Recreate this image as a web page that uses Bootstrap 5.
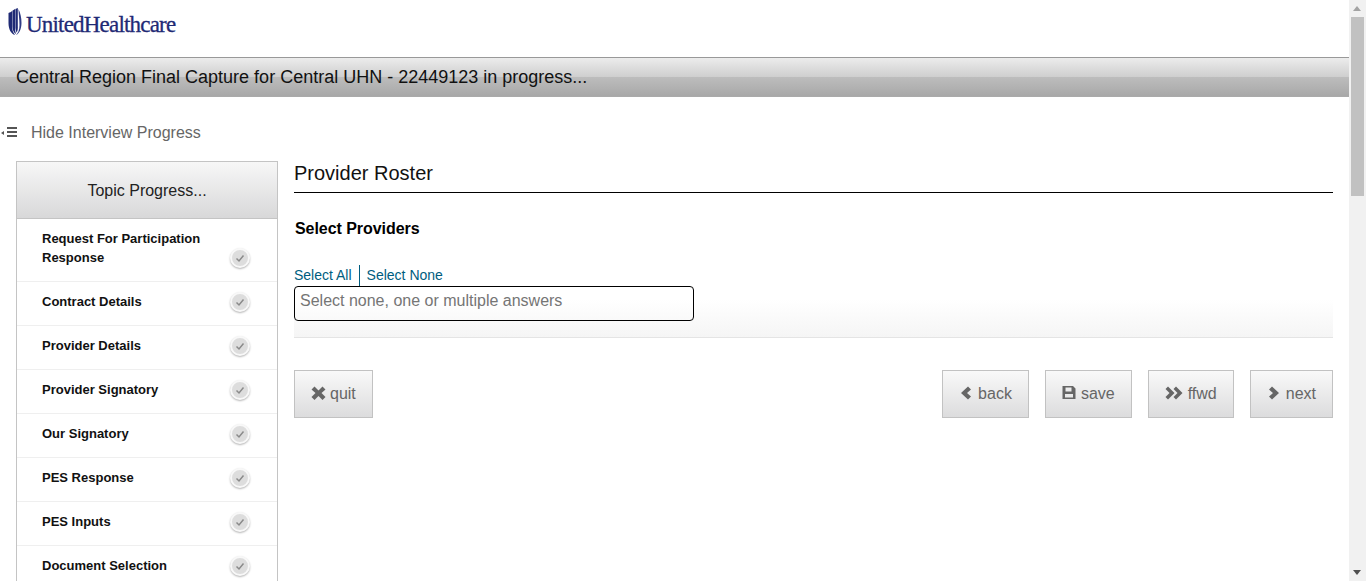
<!DOCTYPE html>
<html lang="en">
<head>
    <meta charset="UTF-8">
    <title>Provider Roster</title>
    <link href="https://cdn.jsdelivr.net/npm/bootstrap@5.3.0/dist/css/bootstrap.min.css" rel="stylesheet">
    <script src="https://cdn.jsdelivr.net/npm/bootstrap@5.3.0/dist/js/bootstrap.bundle.min.js"></script>
    <style>
        html, body {
            height: 581px;
            overflow: hidden;
        }
        body {
            font-family: "Liberation Sans", Arial, sans-serif;
            background-color: #fff;
            color: #000;
        }
        .page-wrap {
            width: 1349px;
            height: 581px;
            overflow: hidden;
        }
        .brand-row {
            height: 57px;
            padding: 8px 0 0 8px;
        }
        .brand-name {
            font-family: "Liberation Serif", serif;
            font-size: 23px;
            line-height: 34px;
            letter-spacing: -0.8px;
            color: #1f2a75;
            margin-left: 4px;
            -webkit-text-stroke: 0.3px #1f2a75;
        }
        .title-bar {
            height: 40px;
            border-top: 1px solid #999;
            border-bottom: 1px solid #aaa;
            background: linear-gradient(to bottom, #ececec 0%, #cfcfcf 49%, #bdbdbd 50%, #a8a8a8 100%);
            font-size: 18px;
            line-height: 38px;
            padding-left: 16px;
            color: #111;
        }
        .toggle-row {
            height: 64px;
            padding-top: 25px;
            font-size: 16px;
            line-height: 22px;
            color: #666;
        }
        .toggle-row svg {
            margin-right: 13px;
        }
        .main-row {
            padding: 0 16px;
            gap: 16px;
        }
        .topic-panel {
            width: 262px;
            flex: none;
            border: 1px solid #c4c4c4;
            height: 460px;
        }
        .topic-head {
            height: 57px;
            border-bottom: 1px solid #c4c4c4;
            background: linear-gradient(to bottom, #f7f7f7, #d8d8d9);
            font-size: 16px;
            line-height: 57px;
            text-align: center;
            color: #222;
        }
        .topic-item {
            padding: 10px 25px 14px 25px;
            border-bottom: 1px solid #efefef;
            font-size: 13px;
            font-weight: 700;
            line-height: 19px;
            color: #111;
            position: relative;
        }
        .topic-text {
            width: 175px;
        }
        .done-dot {
            position: absolute;
            right: 27px;
            bottom: 13px;
            width: 20px;
            height: 20px;
            border-radius: 50%;
            background: #ddd;
            box-shadow: 0 1px 2px 0 rgba(0, 0, 0, .3);
            border: 2px solid #f8f8f8;
        }
        .done-dot svg {
            display: block;
        }
        .roster-col {
            flex: 1;
        }
        .roster-title {
            height: 32px;
            border-bottom: 1px solid #000;
            font-size: 20px;
            line-height: 24px;
            font-weight: 400;
            margin: 0;
            color: #111;
        }
        .roster-sub {
            font-size: 16px;
            font-weight: 700;
            line-height: 20px;
            letter-spacing: -0.05px;
            margin: 26px 0 0 1px;
            color: #000;
        }
        .answer-box {
            height: 84px;
            margin-top: 15px;
            padding-top: 11px;
            border-bottom: 1px solid #e4e4e4;
            background: linear-gradient(to bottom, #fff 55%, #f5f5f5 100%);
        }
        .pick-links {
            font-size: 14px;
            line-height: 21px;
            height: 21px;
        }
        .pick-links a {
            color: #005d80;
            text-decoration: none;
        }
        .pick-links a + a {
            border-left: 1px solid #005d80;
            margin-left: 7px;
            padding-left: 7px;
            display: inline-block;
        }
        .answer-input {
            width: 400px;
            height: 35px;
            border: 1px solid #000;
            border-radius: 4px;
            padding: 4px 5px;
            font-size: 16px;
            line-height: 20px;
            color: #757575;
        }
        .btn-row {
            margin-top: 32px;
        }
        .step-btn {
            height: 48px;
            padding: 0 16px;
            border: 1px solid #c2c2c2;
            border-radius: 0;
            background: linear-gradient(to bottom, #f9f9f9, #dcdcdd);
            font-size: 16px;
            line-height: 46px;
            color: #666;
            display: inline-flex;
            align-items: center;
            gap: 5px;
        }
        .step-btn svg {
            margin-top: -3px;
        }
        .quit-btn {
            gap: 4px;
        }
        .step-group {
            gap: 16px;
        }
        .fake-scroll {
            position: fixed;
            top: 0;
            right: 0;
            width: 17px;
            height: 581px;
            background: #f1f1f1;
        }
        .fake-thumb {
            position: absolute;
            top: 17px;
            left: 2px;
            width: 13px;
            height: 179px;
            background: #c1c1c1;
        }
        .fake-arrow {
            position: absolute;
            left: 4px;
            width: 0;
            height: 0;
            border-left: 4px solid transparent;
            border-right: 4px solid transparent;
        }
        .arrow-up {
            top: 6px;
            border-bottom: 5px solid #a3a3a3;
        }
        .arrow-down {
            bottom: 6px;
            border-top: 5px solid #505050;
        }
    </style>
</head>
<body>
    <div class="page-wrap">
        <!-- Logo -->
        <div class="brand-row d-flex align-items-start">
            <svg width="14" height="29" viewBox="0 0 14 29">
                <path d="M0.5 5 C2 4.5 3 4 4 3 V19 C4 22 5.5 25 7 27 C3 26 0.5 21 0.5 15 Z" fill="#1f2a75"/>
                <path d="M4.4 2.7 C5.5 2 6.4 1.5 7 1 V20 C7 22 7.3 24 8 26 C6 25 4.4 22 4.4 19 Z" fill="#1f2a75"/>
                <path d="M7.4 1 L9.8 0 V20 C9.8 22 9.2 24 8.5 24.5 C8 23 7.4 21 7.4 19 Z" fill="#1f2a75"/>
                <path d="M10.5 1 C12.5 5 13.5 10 13.5 15 C13.5 21 11 26 8 27 C10 25 11.5 22 11.5 17 C11.5 11 10.5 6 10.5 1 Z" fill="#2f3b85"/>
            </svg>
            <span class="brand-name">UnitedHealthcare</span>
        </div>

        <div class="title-bar">Central Region Final Capture for Central UHN - 22449123 in progress...</div>

        <div class="toggle-row d-flex">
            <svg width="18" height="22" viewBox="0 0 18 22">
                <path d="M1 11 L4 9 V13 Z" fill="#555"/>
                <rect x="7" y="5" width="10" height="2" fill="#555"/>
                <rect x="7" y="9" width="10" height="2" fill="#555"/>
                <rect x="7" y="13" width="10" height="2" fill="#555"/>
            </svg>
            <span>Hide Interview Progress</span>
        </div>

        <div class="main-row d-flex align-items-start">
            <!-- Topic list -->
            <div class="topic-panel">
                <div class="topic-head">Topic Progress...</div>
                <div id="topicList"></div>
            </div>

            <!-- Roster -->
            <div class="roster-col">
                <h1 class="roster-title">Provider Roster</h1>
                <h2 class="roster-sub">Select Providers</h2>
                <div class="answer-box">
                    <div class="pick-links"><a href="#">Select All</a><a href="#">Select None</a></div>
                    <div class="answer-input">Select none, one or multiple answers</div>
                </div>
                <div class="btn-row d-flex justify-content-between">
                    <button class="step-btn quit-btn" type="button">
                        <svg width="15" height="16" viewBox="0 0 15 16"><path d="M3.5 1.5 L7.5 5.5 L11.5 1.5 L14.5 4.5 L10.5 8 L14.5 12 L11.5 15 L7.5 11 L3.5 15 L0.5 12 L4.5 8 L0.5 4.5 Z" fill="#666"/></svg>
                        quit
                    </button>
                    <div class="step-group d-flex">
                        <button class="step-btn" type="button">
                            <svg width="14" height="16" viewBox="0 0 14 16"><path d="M9 1.5 L12 4.5 L8 8 L12 11.5 L9 14.5 L2 8 Z" fill="#666"/></svg>
                            back
                        </button>
                        <button class="step-btn" type="button">
                            <svg width="14" height="15" viewBox="0 0 14 15"><path fill-rule="evenodd" d="M0.5 1 H11 L13.5 3.5 V14 H0.5 Z M3.5 2.5 V6.5 H9.5 V2.5 Z M3 9 V12.5 H11 V9 Z" fill="#666"/></svg>
                            save
                        </button>
                        <button class="step-btn" type="button">
                            <svg width="18" height="16" viewBox="0 0 18 16"><path d="M3 1.5 L9.5 8 L3 14.5 L0.5 12 L4.5 8 L0.5 4 Z M11 1.5 L17.5 8 L11 14.5 L8.5 12 L12.5 8 L8.5 4 Z" fill="#666"/></svg>
                            ffwd
                        </button>
                        <button class="step-btn" type="button">
                            <svg width="14" height="16" viewBox="0 0 14 16"><path d="M5 1.5 L2 4.5 L6 8 L2 11.5 L5 14.5 L12 8 Z" fill="#666"/></svg>
                            next
                        </button>
                    </div>
                </div>
            </div>
        </div>
    </div>

    <div class="fake-scroll">
        <div class="fake-arrow arrow-up"></div>
        <div class="fake-thumb"></div>
        <div class="fake-arrow arrow-down"></div>
    </div>

    <script>
        const topics = ["Request For Participation Response", "Contract Details", "Provider Details", "Provider Signatory",
            "Our Signatory", "PES Response", "PES Inputs", "Document Selection"];

        let topicList = document.getElementById("topicList");
        topics.forEach(name => {
            topicList.innerHTML += `<div class="topic-item">
                <div class="topic-text">${name}</div>
                <span class="done-dot"><svg width="16" height="16" viewBox="0 0 16 16"><path d="M4.5 8.5 L7 11 L11.5 5.5" fill="none" stroke="#8a8a8a" stroke-width="1.5"/></svg></span>
            </div>`;
        });
    </script>
</body>
</html>
